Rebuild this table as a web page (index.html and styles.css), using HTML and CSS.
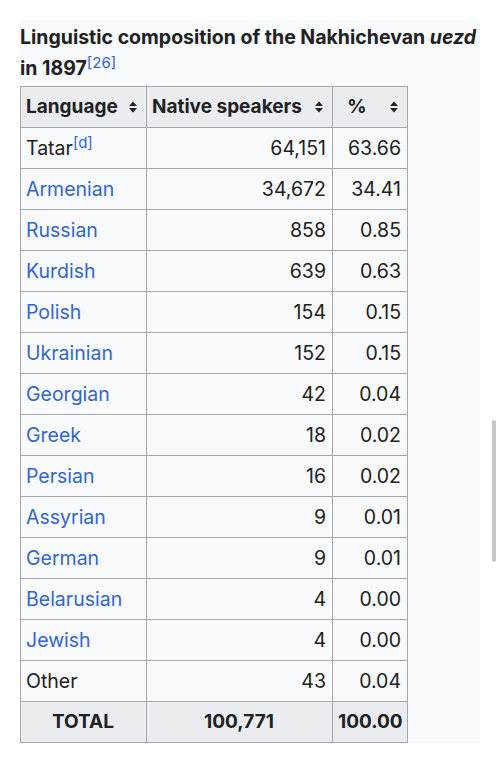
FILE: index.html
```html
<!DOCTYPE html>
<html lang="en">
<head>
<meta charset="utf-8">
<title>Linguistic composition of the Nakhichevan uezd in 1897</title>
<link rel="stylesheet" href="styles.css">
</head>
<body>
<div class="page">
  <div class="panel">
    <div class="caption">Linguistic composition of the Nakhichevan <i>uezd</i> in 1897<sup class="ref">[26]</sup></div>
    <table class="wikitable">
      <colgroup>
        <col class="c1"><col class="c2"><col class="c3">
      </colgroup>
      <thead>
        <tr>
          <th><div class="hd"><span class="lbl">Language</span><svg class="sort" viewBox="0 0 8 12" width="8" height="12"><path d="M0 5L4 0.5L8 5Z M0 7L4 11.5L8 7Z"/></svg></div></th>
          <th><div class="hd"><span class="lbl">Native speakers</span><svg class="sort" viewBox="0 0 8 12" width="8" height="12"><path d="M0 5L4 0.5L8 5Z M0 7L4 11.5L8 7Z"/></svg></div></th>
          <th><div class="hd"><span class="lbl mid">%</span><svg class="sort" viewBox="0 0 8 12" width="8" height="12"><path d="M0 5L4 0.5L8 5Z M0 7L4 11.5L8 7Z"/></svg></div></th>
        </tr>
      </thead>
      <tbody>
        <tr><td>Tatar<sup class="ref">[d]</sup></td><td class="num">64,151</td><td class="num">63.66</td></tr>
        <tr><td><a href="#">Armenian</a></td><td class="num">34,672</td><td class="num">34.41</td></tr>
        <tr><td><a href="#">Russian</a></td><td class="num">858</td><td class="num">0.85</td></tr>
        <tr><td><a href="#">Kurdish</a></td><td class="num">639</td><td class="num">0.63</td></tr>
        <tr><td><a href="#">Polish</a></td><td class="num">154</td><td class="num">0.15</td></tr>
        <tr><td><a href="#">Ukrainian</a></td><td class="num">152</td><td class="num">0.15</td></tr>
        <tr><td><a href="#">Georgian</a></td><td class="num">42</td><td class="num">0.04</td></tr>
        <tr><td><a href="#">Greek</a></td><td class="num">18</td><td class="num">0.02</td></tr>
        <tr><td><a href="#">Persian</a></td><td class="num">16</td><td class="num">0.02</td></tr>
        <tr><td><a href="#">Assyrian</a></td><td class="num">9</td><td class="num">0.01</td></tr>
        <tr><td><a href="#">German</a></td><td class="num">9</td><td class="num">0.01</td></tr>
        <tr><td><a href="#">Belarusian</a></td><td class="num">4</td><td class="num">0.00</td></tr>
        <tr><td><a href="#">Jewish</a></td><td class="num">4</td><td class="num">0.00</td></tr>
        <tr><td>Other</td><td class="num">43</td><td class="num">0.04</td></tr>
      </tbody>
      <tfoot>
        <tr class="total"><th>TOTAL</th><th>100,771</th><th>100.00</th></tr>
      </tfoot>
    </table>
  </div>
  <div class="scrollbar"></div>
</div>
</body>
</html>
```

FILE: styles.css
```css
html, body {
  margin: 0;
  padding: 0;
  background: #ffffff;
}

body {
  font-family: Inter, "Noto Sans", "Liberation Sans", sans-serif;
  color: #202122;
  font-size: 19px;
}

.page {
  display: flex;
  align-items: flex-start;
  padding: 20px 0 0 20px;
  height: 765px;
  box-sizing: border-box;
}

.panel {
  width: 460px;
  height: 723px;
  background: #f8f9fa;
  flex: none;
}

.scrollbar {
  width: 4px;
  height: 142px;
  margin: 400px 0 0 12px;
  border-radius: 2px;
  background: #c6c6c6;
  flex: none;
}

.caption {
  font-weight: 700;
  font-size: 19.5px;
  line-height: 31px;
  padding: 2px 0 2px 0;
  width: 462px;
}

.caption i {
  font-style: italic;
}

.wikitable {
  border-collapse: collapse;
  table-layout: fixed;
  width: 388px;
  background: #f8f9fa;
  color: #202122;
  font-size: 19.5px;
}

.c1 { width: 126px; }
.c2 { width: 186px; }
.c3 { width: 75px; }

.wikitable th,
.wikitable td {
  border: 1px solid #a2a9b1;
  height: 41px;
  padding: 0 6px 0 5px;
  box-sizing: border-box;
  line-height: 24px;
}

.wikitable thead th {
  background: #eaecf0;
  font-weight: 700;
  font-size: 19px;
  padding: 0 9px 0 5px;
}

.hd {
  display: flex;
  align-items: center;
  gap: 10px;
}

.lbl {
  flex: 1;
  text-align: left;
  white-space: nowrap;
}

.lbl.mid {
  text-align: center;
  padding-right: 4px;
}

.sort {
  flex: none;
  fill: #202122;
}

.wikitable td {
  text-align: left;
  font-weight: 400;
}

.wikitable td.num {
  text-align: right;
}

.wikitable a {
  color: #3366cc;
  text-decoration: none;
}

.ref {
  color: #3366cc;
  font-size: 15px;
  font-weight: 400;
  line-height: 0;
  vertical-align: 7px;
}

.total th {
  background: #eaecf0;
  font-weight: 700;
  font-size: 19px;
  text-align: center;
}
```
